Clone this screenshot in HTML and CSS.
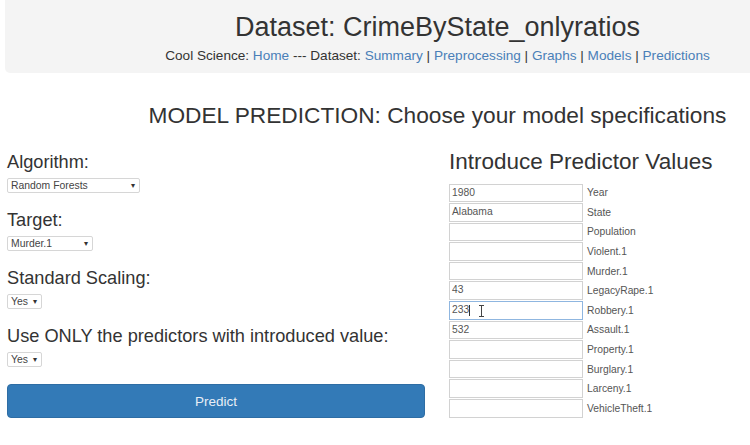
FILE: index.html
```html
<!DOCTYPE html>
<html>
<head>
<meta charset="utf-8">
<link rel="stylesheet" href="styles.css">
</head>
<body>
<header class="jumbo">
  <div class="jumbo-inner">
    <h1 class="title">Dataset: CrimeByState_onlyratios</h1>
    <p class="nav">Cool Science: <a>Home</a> --- Dataset: <a>Summary</a> | <a>Preprocessing</a> | <a>Graphs</a> | <a>Models</a> | <a>Predictions</a></p>
  </div>
</header>
<h2 class="section-title">MODEL PREDICTION: Choose your model specifications</h2>
<main class="cols">
  <section class="left">
    <div class="group">
      <label class="flabel">Algorithm:</label>
      <div class="sel w-alg"><span>Random Forests</span><span class="arr">&#9662;</span></div>
    </div>
    <div class="group">
      <label class="flabel">Target:</label>
      <div class="sel w-tgt"><span>Murder.1</span><span class="arr">&#9662;</span></div>
    </div>
    <div class="group">
      <label class="flabel">Standard Scaling:</label>
      <div class="sel w-yes"><span>Yes</span><span class="arr">&#9662;</span></div>
    </div>
    <div class="group">
      <label class="flabel">Use ONLY the predictors with introduced value:</label>
      <div class="sel w-yes"><span>Yes</span><span class="arr">&#9662;</span></div>
    </div>
    <button class="btn">Predict</button>
  </section>
  <section class="right">
    <h3 class="rtitle">Introduce Predictor Values</h3>
    <div class="rows">
      <div class="row"><div class="inp">1980</div><span class="plabel">Year</span></div>
      <div class="row"><div class="inp">Alabama</div><span class="plabel">State</span></div>
      <div class="row"><div class="inp"></div><span class="plabel">Population</span></div>
      <div class="row"><div class="inp"></div><span class="plabel">Violent.1</span></div>
      <div class="row"><div class="inp"></div><span class="plabel">Murder.1</span></div>
      <div class="row"><div class="inp">43</div><span class="plabel">LegacyRape.1</span></div>
      <div class="row"><div class="inp focus">233<span class="caret"></span>
        <svg class="ibeam" width="7" height="12" viewBox="0 0 7 12"><path d="M1 0.5h5M3.5 0.5v11M1 11.5h5" stroke="#444" stroke-width="1" fill="none"/></svg>
      </div><span class="plabel">Robbery.1</span></div>
      <div class="row"><div class="inp">532</div><span class="plabel">Assault.1</span></div>
      <div class="row"><div class="inp"></div><span class="plabel">Property.1</span></div>
      <div class="row"><div class="inp"></div><span class="plabel">Burglary.1</span></div>
      <div class="row"><div class="inp"></div><span class="plabel">Larceny.1</span></div>
      <div class="row"><div class="inp"></div><span class="plabel">VehicleTheft.1</span></div>
    </div>
  </section>
</main>
</body>
</html>
```
FILE: styles.css
```css
html, body {
  margin: 0;
  padding: 0;
  background: #fff;
}
body {
  font-family: "Liberation Sans", Arial, sans-serif;
  color: #333;
  width: 750px;
  height: 445px;
  overflow: hidden;
}
.jumbo {
  margin-left: 5px;
  height: 73px;
  background: #f4f4f4;
  border-bottom-left-radius: 5px;
  box-sizing: border-box;
  padding-top: 12px;
}
.jumbo-inner {
  margin-left: 120px;
  text-align: center;
}
.title {
  margin: 0;
  font-size: 27px;
  line-height: 31px;
  font-weight: normal;
  color: #333;
}
.nav {
  margin: 5px 0 0 0;
  font-size: 13.6px;
  line-height: 16px;
  color: #333;
}
.nav a {
  color: #4a7fb8;
}
.section-title {
  margin: 29px 0 0 125px;
  text-align: center;
  font-size: 22.7px;
  line-height: 26px;
  font-weight: normal;
  color: #333;
}
.cols {
  display: flex;
  margin-top: 21px;
  padding-left: 7px;
}
.left {
  width: 418px;
  padding-top: 3px;
}
.group {
  display: flex;
  flex-direction: column;
  align-items: flex-start;
  gap: 6px;
  margin-bottom: 17px;
}
.flabel {
  font-size: 18.2px;
  line-height: 20px;
  color: #333;
}
.sel {
  height: 15px;
  box-sizing: border-box;
  border: 1px solid #d6d6d6;
  border-radius: 2px;
  background: #fff;
  display: flex;
  align-items: center;
  justify-content: space-between;
  padding: 0 4px 0 3px;
  font-size: 10.4px;
  color: #444;
}
.arr {
  font-size: 8px;
  color: #333;
}
.w-alg { width: 133px; }
.w-tgt { width: 86px; }
.w-yes { width: 35px; }
.btn {
  display: block;
  width: 418px;
  height: 34px;
  margin-top: 3px;
  border: 1px solid #2e6da4;
  border-radius: 4px;
  background: #337ab7;
  color: #e8eef6;
  font-family: "Liberation Sans", Arial, sans-serif;
  font-size: 13.5px;
  padding: 0;
}
.right {
  margin-left: 24px;
  width: 300px;
}
.rtitle {
  margin: 0;
  font-size: 22.5px;
  line-height: 26px;
  font-weight: normal;
  color: #333;
}
.rows {
  margin-top: 8.5px;
  display: flex;
  flex-direction: column;
  gap: 1px;
}
.row {
  display: flex;
  align-items: center;
  gap: 4px;
}
.inp {
  position: relative;
  width: 134px;
  height: 18.6px;
  box-sizing: border-box;
  border: 1px solid #d2d2d2;
  font-size: 10.3px;
  line-height: 16.6px;
  padding-left: 2px;
  color: #555;
  display: flex;
  align-items: center;
}
.inp.focus {
  border-color: #8fb6e0;
}
.caret {
  display: inline-block;
  width: 1px;
  height: 11px;
  background: #333;
}
.ibeam {
  position: absolute;
  left: 28px;
  top: 3px;
}
.plabel {
  font-size: 10.3px;
  color: #555;
}
```
